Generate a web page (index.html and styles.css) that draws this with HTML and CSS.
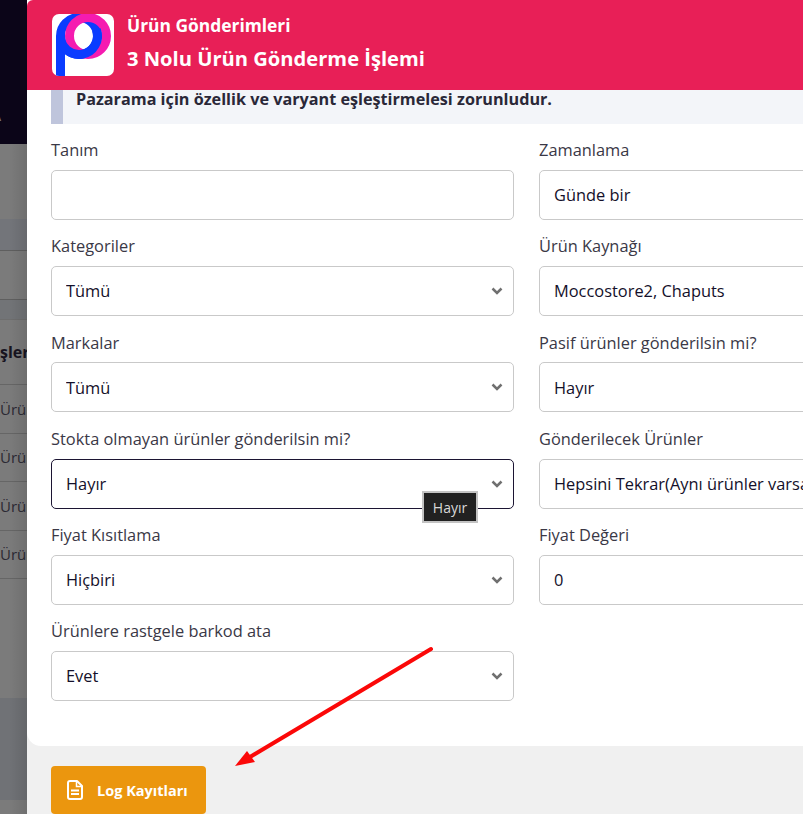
FILE: index.html
```html
<!DOCTYPE html>
<html lang="tr">
<head>
<meta charset="utf-8">
<title>Ürün Gönderimleri</title>
<link rel="stylesheet" href="styles.css">
</head>
<body>
<div class="page">
  <aside class="backdrop">
    <div class="bd-top"><span class="bd-a">A</span></div>
    <div class="bd bd-1"></div>
    <div class="bd bd-2 line"></div>
    <div class="bd bd-3 line"></div>
    <div class="bd bd-4 line"></div>
    <div class="bd bd-head line">şler</div>
    <div class="bd bd-row line">Ürün</div>
    <div class="bd bd-row line">Ürün</div>
    <div class="bd bd-row line">Ürün</div>
    <div class="bd bd-row line">Ürün</div>
    <div class="bd bd-5"></div>
    <div class="bd bd-6"></div>
    <div class="bd bd-7"></div>
  </aside>
  <main class="modal">
    <div class="sheet">
      <header class="head">
        <div class="logo">
          <svg viewBox="0 0 62 62" width="62" height="62" aria-hidden="true">
            <rect class="logo-stem" x="4" y="22" width="9" height="40"/>
            <circle class="logo-blue" cx="27" cy="22" r="18.500"/>
            <circle class="logo-pink" cx="36" cy="22" r="18.500"/>
            <path class="logo-blue" d="M44.400 15.700A18.500 18.500 0 1 1 8.500 22"/>
          </svg>
        </div>
        <div class="titles">
          <div class="title-sm">Ürün Gönderimleri</div>
          <div class="title-lg">3 Nolu Ürün Gönderme İşlemi</div>
        </div>
      </header>
      <div class="notice">Pazarama için özellik ve varyant eşleştirmelesi zorunludur.</div>
      <form class="grid">
        <div class="field"><label class="lbl">Tanım</label><input class="ctl" type="text"></div>
        <div class="field"><label class="lbl">Zamanlama</label><select class="ctl sel"><option>Günde bir</option></select></div>
        <div class="field"><label class="lbl">Kategoriler</label><select class="ctl sel"><option>Tümü</option></select></div>
        <div class="field"><label class="lbl">Ürün Kaynağı</label><select class="ctl sel"><option>Moccostore2, Chaputs</option></select></div>
        <div class="field"><label class="lbl">Markalar</label><select class="ctl sel"><option>Tümü</option></select></div>
        <div class="field"><label class="lbl">Pasif ürünler gönderilsin mi?</label><select class="ctl sel"><option>Hayır</option></select></div>
        <div class="field"><label class="lbl">Stokta olmayan ürünler gönderilsin mi?</label><select class="ctl sel focus"><option>Hayır</option></select></div>
        <div class="field"><label class="lbl">Gönderilecek Ürünler</label><select class="ctl sel"><option>Hepsini Tekrar(Aynı ürünler varsa güncellenir)</option></select></div>
        <div class="field"><label class="lbl">Fiyat Kısıtlama</label><select class="ctl sel"><option>Hiçbiri</option></select></div>
        <div class="field"><label class="lbl">Fiyat Değeri</label><input class="ctl" type="text" value="0"></div>
        <div class="field"><label class="lbl">Ürünlere rastgele barkod ata</label><select class="ctl sel"><option>Evet</option></select></div>
      </form>
    </div>
    <footer class="foot">
      <button class="log" type="button">
        <svg class="log-ico" viewBox="0 0 16 20" width="16" height="20" aria-hidden="true">
          <path d="M3 1H10L15 6V17A2 2 0 0 1 13 19H3A2 2 0 0 1 1 17V3A2 2 0 0 1 3 1Z" fill="none" stroke="#fff" stroke-width="2" stroke-linejoin="round"/>
          <path d="M9.500 1V6.500H15" fill="none" stroke="#fff" stroke-width="1.500"/>
          <path d="M4 10.500H12M4 14H12" stroke="#fff" stroke-width="2"/>
        </svg>
        Log Kayıtları
      </button>
    </footer>
  </main>
  <div class="tip">Hayır</div>
  <svg class="arrow" viewBox="0 0 803 814" width="803" height="814" aria-hidden="true">
    <path d="M431 649L250 757" stroke="#fb0808" stroke-width="4" stroke-linecap="round" fill="none"/>
    <path d="M235 766L247 751L255 762Z" fill="#fb0808"/>
  </svg>
</div>
</body>
</html>
```

FILE: styles.css
```css
* { box-sizing: border-box; }
html, body { margin: 0; height: 100%; overflow: hidden; }
body { font-family: "Open Sans", "Noto Sans", sans-serif; color: #1c1733; background: #7a7a7a; }
.page { position: relative; display: flex; width: 803px; height: 814px; overflow: hidden; }

.backdrop { position: relative; flex: 0 0 27px; width: 27px; height: 814px; overflow: hidden; display: flex; flex-direction: column; background: #7a7a7a; }
.backdrop::after { content: ""; position: absolute; inset: 144px 0 0 0; background: linear-gradient(90deg, rgba(0,0,0,0) 35%, rgba(0,0,0,.1) 100%); }
.bd-top { height: 144px; flex: none; background: #0b0518; position: relative; color: #77757f; font-size: 16px; line-height: 20px; padding-top: 105px; }
.bd-a { display: block; margin-left: -9px; }
.bd { flex: none; white-space: nowrap; color: #17141f; font-size: 15px; display: flex; align-items: center; background: #7b7b7b; }
.line { border-bottom: 1px solid #666; }
.bd-1 { height: 75px; }
.bd-2 { height: 32px; background: #73757a; border-bottom-color: #5f5f5f; }
.bd-3 { height: 49px; border-bottom-color: #5f5f5f; }
.bd-4 { height: 20px; background: #727477; border-bottom-color: #6e6e6e; }
.bd-head { height: 65px; font-weight: 700; font-size: 16px; }
.bd-row { height: 48.500px; color: #2b2933; }
.bd-5 { height: 119px; }
.bd-6 { height: 102px; background: #707276; }
.bd-7 { height: 15px; }

.modal { flex: 0 0 1000px; width: 1000px; height: 814px; background: #f0f0f0; display: flex; flex-direction: column; }
.sheet { height: 746px; flex: none; background: #fff; border-radius: 0 0 0 14px; }
.head { height: 90px; background: #e81f57; display: flex; align-items: center; gap: 13px; padding: 0 24px 0 25px; border-top-left-radius: 6px; }
.logo { width: 62px; height: 62px; background: #fff; border-radius: 7px; overflow: hidden; flex: none; margin-top: -1px; }
.logo svg { display: block; }
.logo-stem { fill: #0a3cff; }
.logo-blue { fill: none; stroke: #0a3cff; stroke-width: 9; }
.logo-pink { fill: none; stroke: #f51bb0; stroke-width: 9; }
.titles { color: #fff; display: flex; flex-direction: column; gap: 8px; margin-top: -5px; }
.title-sm { font-size: 17.400px; line-height: 22px; font-weight: 700; }
.title-lg { font-size: 20.150px; line-height: 28px; font-weight: 700; }

.notice { height: 34px; margin: 0 -1px 0 24px; background: #f3f5f9; border-left: 12px solid #bfc5dc; padding-left: 13px; font-weight: 700; font-size: 16.200px; line-height: 19px; color: #2a2838; }

.grid { display: grid; grid-template-columns: 463px 463px; column-gap: 25px; grid-auto-rows: 96.200px; padding: 14.200px 0 0 24px; }
.field { display: flex; flex-direction: column; gap: 7.800px; min-width: 0; }
.lbl { font-size: 16.400px; line-height: 24px; color: #3a3846; height: 24px; }
.ctl { display: block; width: 100%; height: 50px; flex: none; border: 1px solid #c9c9c9; border-radius: 5px; background: #fff; font: inherit; font-size: 16.400px; color: #14102a; padding: 0 36px 0.600px 14px; outline: none; margin: 0; }
.sel { appearance: none; -webkit-appearance: none; background-image: url("data:image/svg+xml,%3Csvg xmlns='http://www.w3.org/2000/svg' width='12' height='8' viewBox='0 0 12 8'%3E%3Cpath d='M1.500 1.500L6 6L10.500 1.500' fill='none' stroke='%23707070' stroke-width='2.500'/%3E%3C/svg%3E"); background-repeat: no-repeat; background-position: right 10px center; }
.focus { border-color: #1c1533; }

.foot { padding: 20px 24px 0; flex: 1; }
.log { display: flex; align-items: center; gap: 14px; width: 155px; height: 48px; padding: 0 0 0 16px; border: 0; border-radius: 4px; background: #eb960e; color: #fff; font: inherit; font-weight: 700; font-size: 14.500px; }
.log-ico { flex: none; }

.tip { position: absolute; left: 422px; top: 491px; width: 56px; height: 32px; background: #212121; border: 2px solid #c3c3c3; color: #d8d8d8; font-size: 14px; display: flex; align-items: center; justify-content: center; }
.arrow { position: absolute; left: 0; top: 0; pointer-events: none; }
```
